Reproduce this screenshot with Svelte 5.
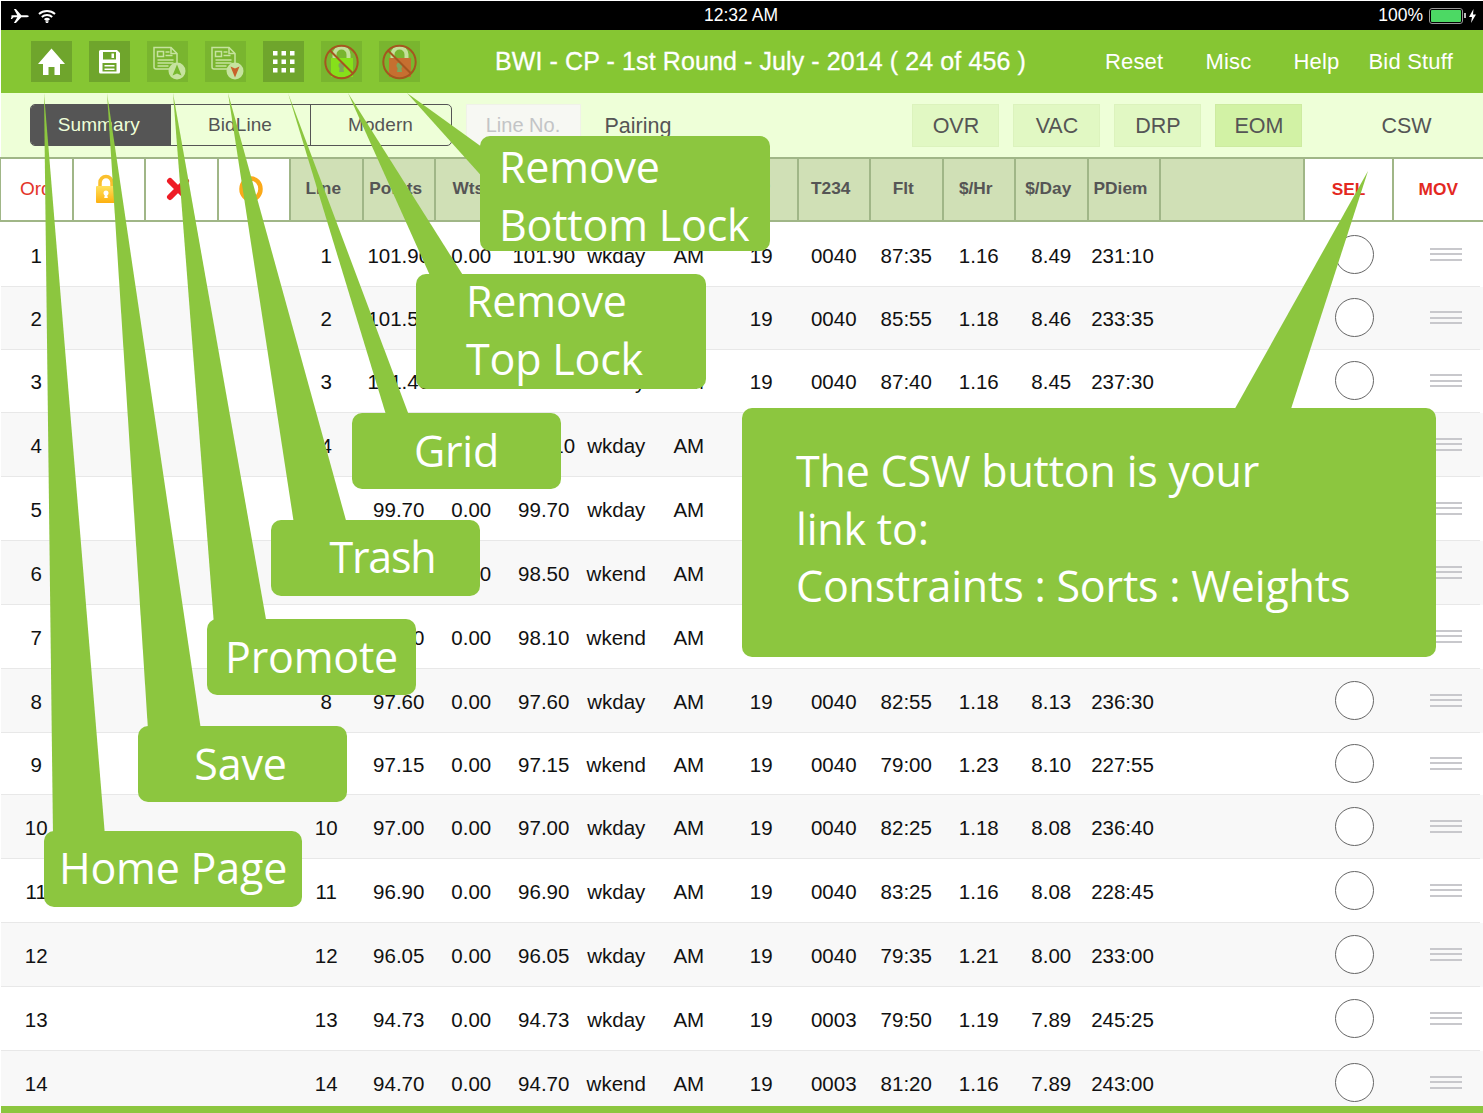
<script>
  const tabs = ['Summary', 'BidLine', 'Modern'];
  const filters = ['OVR', 'VAC', 'DRP', 'EOM'];
  const links = ['Reset', 'Misc', 'Help', 'Bid Stuff'];
  const cols = ['Line', 'Points', 'Wts', 'Tot', 'Day', 'AP', 'DP', 'T234', 'Flt', '$/Hr', '$/Day', 'PDiem'];

  const rows = [
    ['101.90', '0.00', '101.90', 'wkday', 'AM', '19', '0040', '87:35', '1.16', '8.49', '231:10'],
    ['101.50', '0.00', '101.50', 'wkday', 'AM', '19', '0040', '85:55', '1.18', '8.46', '233:35'],
    ['101.40', '0.00', '101.40', 'wkday', 'AM', '19', '0040', '87:40', '1.16', '8.45', '237:30'],
    ['100.10', '0.00', '100.10', 'wkday', 'AM', '19', '0040', '84:10', '1.18', '8.30', '235:00'],
    ['99.70', '0.00', '99.70', 'wkday', 'AM', '19', '0040', '83:50', '1.19', '8.26', '232:40'],
    ['98.50', '0.00', '98.50', 'wkend', 'AM', '19', '0040', '81:05', '1.21', '8.21', '230:15'],
    ['98.10', '0.00', '98.10', 'wkend', 'AM', '19', '0040', '80:30', '1.22', '8.17', '229:50'],
    ['97.60', '0.00', '97.60', 'wkday', 'AM', '19', '0040', '82:55', '1.18', '8.13', '236:30'],
    ['97.15', '0.00', '97.15', 'wkend', 'AM', '19', '0040', '79:00', '1.23', '8.10', '227:55'],
    ['97.00', '0.00', '97.00', 'wkday', 'AM', '19', '0040', '82:25', '1.18', '8.08', '236:40'],
    ['96.90', '0.00', '96.90', 'wkday', 'AM', '19', '0040', '83:25', '1.16', '8.08', '228:45'],
    ['96.05', '0.00', '96.05', 'wkday', 'AM', '19', '0040', '79:35', '1.21', '8.00', '233:00'],
    ['94.73', '0.00', '94.73', 'wkday', 'AM', '19', '0003', '79:50', '1.19', '7.89', '245:25'],
    ['94.70', '0.00', '94.70', 'wkend', 'AM', '19', '0003', '81:20', '1.16', '7.89', '243:00']
  ];

  // callout tails, tip first
  const tails = [
    '44,93 53,836 105,836',
    '107,93 148,730 201,730',
    '173,93 214,625 267,625',
    '228,93 294,524 347,524',
    '288,93 387,418 410,418',
    '348,93 432,280 466,280',
    '407,93 486,150 486,181',
    '1368,171 1233,412 1290,412'
  ];
</script>

<div class="page">
  <div class="status">
    <div class="status-left">
      <svg width="20" height="16" viewBox="0 0 20 16"><path fill="#fff" d="M1 8.200c0-.6 1-1 2-1h4.300L3.900 1h2l5.400 6.200h4.900c1.200 0 2.600.4 2.600 1s-1.400 1-2.600 1h-4.900L5.900 15h-2l3.400-5.800H3.600L2 11H.8l.9-2.800C1.300 8.200 1 8.200 1 8.200z"/></svg>
      <svg width="18" height="14" viewBox="0 0 18 14" fill="none" stroke="#fff" stroke-width="2"><path d="M1 5c4.500-4 11.500-4 16 0"/><path d="M3.800 8c3-2.600 7.400-2.600 10.400 0"/><path d="M6.600 10.800c1.400-1.100 3.400-1.100 4.800 0"/><circle cx="9" cy="12.600" r="0.500" fill="#fff"/></svg>
    </div>
    <div class="time">12:32 AM</div>
    <div class="status-right">
      <span class="pct">100%</span>
      <span class="battery"><span class="charge"></span></span>
      <span class="nub"></span>
      <svg width="7" height="14" viewBox="0 0 7 14"><path fill="#fff" d="M4.500 0 0 8h3L2 14l5-8.500H4z"/></svg>
    </div>
  </div>

  <nav class="nav">
    <div class="tools">
      <div class="tool on">
        <svg viewBox="0 0 41 41"><path fill="#fff" d="M20.500 7.500 7 23h5v11h5.500v-8h6v8H29V23h5z"/></svg>
      </div>
      <div class="tool on">
        <svg viewBox="0 0 41 41">
          <path fill="#fff" d="M11.500 9H28l3 3v19a1.500 1.500 0 0 1-1.500 1.500h-18A1.500 1.500 0 0 1 10 31V10.500A1.500 1.500 0 0 1 11.500 9z"/>
          <path fill="#6fa52c" d="M14 11h13v7.500H14zM13.500 22h14v8.500h-14z"/>
          <path fill="#fff" d="M22.500 12.500h2.500v4.500h-2.500zM15.500 24h10v1.500h-10zM15.500 27.500h10V29h-10z"/>
        </svg>
      </div>
      <div class="tool">
        <svg viewBox="0 0 41 41">
          <g fill="none" stroke="#c6e39f" stroke-width="1.500">
            <path d="M7 6.500h17l6 6v15.500H9a2 2 0 0 1-2-2z"/><path d="M24 6.500v6h6"/>
            <path d="M10.500 10.500h6v5h-6z"/><path d="M18.500 11h4M18.500 14.500h7M10.500 19h16M10.500 22h16M10.500 25h11"/>
          </g>
          <circle cx="30" cy="30" r="8.500" fill="#c6e39f"/>
          <path fill="#77b82e" d="M30 23.500 34.500 34.500 30 32.500 25.500 34.500z"/>
        </svg>
      </div>
      <div class="tool">
        <svg viewBox="0 0 41 41">
          <g fill="none" stroke="#c6e39f" stroke-width="1.500">
            <path d="M7 6.500h17l6 6v15.500H9a2 2 0 0 1-2-2z"/><path d="M24 6.500v6h6"/>
            <path d="M10.500 10.500h6v5h-6z"/><path d="M18.500 11h4M18.500 14.500h7M10.500 19h16M10.500 22h16M10.500 25h11"/>
          </g>
          <circle cx="30" cy="30" r="8.500" fill="#c6e39f"/>
          <path fill="#c8622a" d="M30 36.500 34.500 25.500 30 27.500 25.500 25.500z"/>
        </svg>
      </div>
      <div class="tool on">
        <svg viewBox="0 0 41 41" fill="#fff">
          {#each [10, 18.5, 27] as y}
            {#each [10, 18.5, 27] as x}
              <rect {x} {y} width="4.500" height="4.500" />
            {/each}
          {/each}
        </svg>
      </div>
      {#each ['#86e01a', '#c66f30'] as body}
        <div class="tool">
          <svg viewBox="0 0 41 41">
            <path fill="none" stroke="#c4e09a" stroke-width="4" d="M13.500 17v-3.500a7 7 0 0 1 14 0V17"/>
            <rect x="10" y="17" width="22" height="19" fill={body} />
            <circle cx="20.500" cy="24.500" r="3" fill="#7fa55a"/>
            <path fill="#7fa55a" d="M19 25h3l1 6h-5z"/>
            <circle cx="20.500" cy="21" r="16.200" fill="none" stroke="#a5561f" stroke-width="2"/>
            <path stroke="#a5561f" stroke-width="2" d="M9 9.500 32 32.500"/>
          </svg>
        </div>
      {/each}
    </div>
    <div class="title">BWI - CP - 1st Round - July - 2014 ( 24 of 456 )</div>
    <div class="links">
      {#each links as link}
        <span>{link}</span>
      {/each}
    </div>
  </nav>

  <div class="subbar">
    <div class="tabs">
      {#each tabs as tab, i}
        <div class="tab" class:active={i === 0}>{tab}</div>
      {/each}
    </div>
    <div class="line-input">Line No.</div>
    <div class="pairing">Pairing</div>
    <div class="filters">
      {#each filters as f}
        <div class="filter" class:current={f === 'EOM'}>{f}</div>
      {/each}
    </div>
    <div class="csw">CSW</div>
  </div>

  <div class="head">
    <div class="hcell plain ord">Ord</div>
    <div class="hcell plain">
      <svg class="hicon" width="22" height="30" viewBox="0 0 22 30">
        <defs><linearGradient id="gold" x1="0" y1="0" x2="0" y2="1"><stop offset="0" stop-color="#ffe15a"/><stop offset="1" stop-color="#fdb010"/></linearGradient></defs>
        <path fill="none" stroke="#fbc02d" stroke-width="3.500" d="M5 13V8.500a6 6 0 0 1 12 0V13"/>
        <rect x="1" y="12" width="20" height="17" rx="1" fill="url(#gold)"/>
        <circle cx="11" cy="19" r="2.500" fill="#fff"/><path fill="#fff" d="M10 20h2l.8 4h-3.600z"/>
      </svg>
    </div>
    <div class="hcell plain">
      <svg class="hicon" width="24" height="24" viewBox="0 0 24 24"><path stroke="#ee1c25" stroke-width="6" stroke-linecap="round" d="M4 4 20 20M20 4 4 20"/></svg>
    </div>
    <div class="hcell plain">
      <svg class="hicon" width="24" height="26" viewBox="0 0 24 26"><ellipse cx="12" cy="13" rx="9.500" ry="10.500" fill="none" stroke="#fba919" stroke-width="4.500"/></svg>
    </div>
    {#each cols as c}
      <div class="hcell label">{c}</div>
    {/each}
    <div class="hcell"></div>
    <div class="hcell plain action">SEL</div>
    <div class="hcell plain action">MOV</div>
  </div>

  <div class="list">
    {#each rows as r, i}
      <div class="row">
        <div class="cell">{i + 1}</div>
        <div></div>
        <div class="cell">{i + 1}</div>
        {#each r as v}
          <div class="cell">{v}</div>
        {/each}
        <div class="radio-slot"><span class="radio"></span></div>
        <div class="grip"><i></i><i></i><i></i></div>
      </div>
    {/each}
  </div>

  <div class="foot"></div>

  <svg class="tails" width="1483" height="1113" viewBox="0 0 1483 1113">
    {#each tails as t}
      <polygon points={t} fill="#8cc63f" />
    {/each}
  </svg>

  <div class="callout c-home center">Home Page</div>
  <div class="callout c-save center">Save</div>
  <div class="callout c-promote center">Promote</div>
  <div class="callout c-trash center">Trash</div>
  <div class="callout c-grid center">Grid</div>
  <div class="callout c-top"><div class="lift">Remove<br />Top Lock</div></div>
  <div class="callout c-bottom">Remove<br />Bottom Lock</div>
  <div class="callout c-csw">The CSW button is your<br />link to:<br />Constraints : Sorts : Weights</div>
</div>

<style>
  :global(body) {
    margin: 0;
    background: #fff;
  }
  .page {
    position: relative;
    width: 1483px;
    height: 1113px;
    overflow: hidden;
    padding: 1px 0 0 1px;
    box-sizing: border-box;
    font-family: "Liberation Sans", Arial, sans-serif;
    color: #111;
  }

  .status {
    height: 29px;
    background: #000;
    color: #fff;
    display: grid;
    grid-template-columns: 1fr auto 1fr;
    align-items: center;
    font-size: 17.500px;
  }
  .status-left {
    display: flex;
    align-items: center;
    gap: 8px;
    padding-left: 9px;
  }
  .time {
    margin-right: 2px;
  }
  .status-right {
    display: flex;
    align-items: center;
    justify-content: flex-end;
    padding-right: 7px;
  }
  .pct {
    margin-right: 6px;
  }
  .battery {
    width: 30px;
    height: 12px;
    border: 1px solid #999;
    border-radius: 3px;
    padding: 1px;
    display: block;
  }
  .charge {
    display: block;
    height: 100%;
    background: #4cd964;
    border-radius: 1px;
  }
  .nub {
    width: 2px;
    height: 5px;
    background: #bbb;
    margin: 0 3px 0 1px;
  }

  .nav {
    height: 63px;
    background: #86c633;
    display: flex;
    align-items: center;
    color: #fff;
  }
  .tools {
    display: flex;
    gap: 17px;
    margin-left: 30px;
  }
  .tool {
    width: 41px;
    height: 41px;
    background: #79b52f;
  }
  .tool.on {
    background: #6fa52c;
  }
  .tool svg {
    display: block;
    width: 41px;
    height: 41px;
  }
  .title {
    margin-left: 75px;
    font-size: 25px;
    letter-spacing: 0.100px;
    -webkit-text-stroke: 0.300px #fff;
    white-space: nowrap;
  }
  .links {
    margin-left: auto;
    margin-right: 30px;
    display: flex;
    gap: 42px;
    font-size: 22px;
    letter-spacing: 0.200px;
    white-space: nowrap;
  }
  .links span:last-child {
    margin-left: -13px;
  }

  .subbar {
    height: 64px;
    box-sizing: border-box;
    background: #eeffd8;
    padding-top: 11px;
    display: flex;
    align-items: flex-start;
    color: #555;
  }
  .tabs {
    display: flex;
    margin-left: 29px;
    height: 42px;
    box-sizing: border-box;
    border: 1.500px solid #555;
    border-radius: 5px;
    overflow: hidden;
    font-size: 19px;
    letter-spacing: 0.100px;
  }
  .tab {
    width: 140px;
    display: flex;
    align-items: center;
    justify-content: center;
    border-left: 1.500px solid #555;
    box-sizing: border-box;
  }
  .tab:first-child {
    width: 138.500px;
    padding-right: 3px;
    border-left: 0;
  }
  .tab:last-child {
    width: 141px;
  }
  .tab.active {
    background: #555;
    color: #eeffd8;
  }
  .line-input {
    width: 115px;
    height: 42px;
    margin-left: 14px;
    box-sizing: border-box;
    background: #f7f8f3;
    border: 1px solid #f0f2e8;
    color: #c3c4c6;
    font-size: 20px;
    display: flex;
    align-items: center;
    justify-content: center;
  }
  .pairing {
    margin-left: 24px;
    font-size: 21.500px;
    line-height: 44px;
  }
  .filters {
    display: flex;
    gap: 14px;
    margin-left: 241px;
  }
  .filter {
    width: 87px;
    height: 43px;
    padding-top: 1px;
    box-sizing: border-box;
    background: #e1f8c3;
    border: 1px solid #dcf3bd;
    font-size: 21.500px;
    display: flex;
    align-items: center;
    justify-content: center;
  }
  .filter.current {
    background: #d2f2a5;
    border-color: #cdeba0;
  }
  .csw {
    font-size: 21.500px;
    margin-left: 79px;
    line-height: 45px;
  }

  .head {
    height: 65px;
    box-sizing: border-box;
    margin-left: -1px;
    background: #a0b687;
    padding: 2px 0 2px 1px;
    display: grid;
    grid-template-columns: repeat(15, 70.500px) 70px 142.500px 87px 88.500px;
    column-gap: 2px;
    font-size: 17.300px;
    font-weight: bold;
    color: #555;
  }
  .hcell {
    background: #d0e0b6;
    display: flex;
    align-items: center;
    justify-content: center;
    padding-bottom: 1px;
    box-sizing: border-box;
  }
  .hcell.label {
    padding: 0 6px 3px 0;
  }
  .hcell.plain {
    background: #fff;
  }
  .hicon {
    margin-right: 6px;
  }
  .ord {
    font-weight: normal;
    font-size: 19px;
    color: #e3342a;
    padding-right: 1px;
  }
  .action {
    color: #e3281f;
  }

  .list {
    margin-top: 1px;
  }
  .row {
    height: 64px;
    box-sizing: border-box;
    display: grid;
    grid-template-columns: 72.500px 217.500px repeat(11, 72.500px) 70px 176.500px 39px 56px 32px;
    align-items: center;
    background: linear-gradient(#e8e8e8, #e8e8e8) left bottom / calc(100% - 3px) 1.500px no-repeat;
    font-size: 20.500px;
  }
  .row:nth-child(even) {
    background-color: #f8f8f8;
  }
  .row:nth-child(2),
  .row:nth-child(3) {
    height: 63px;
  }
  .row:nth-child(9) {
    height: 62px;
  }
  .row:last-child {
    background-image: none;
  }
  .cell {
    text-align: center;
    white-space: nowrap;
    padding: 1px 2px 0 0;
  }
  .radio-slot {
    grid-column: 16;
    padding-bottom: 2px;
  }
  .radio {
    display: block;
    width: 39px;
    height: 39px;
    box-sizing: border-box;
    border: 1.500px solid #666;
    border-radius: 50%;
    background: #fff;
  }
  .grip {
    grid-column: 18;
    display: flex;
    flex-direction: column;
    gap: 3.500px;
    padding-bottom: 2px;
  }
  .grip i {
    display: block;
    height: 2px;
    background: #c8c8cc;
  }

  .foot {
    position: absolute;
    left: 1px;
    right: 0;
    bottom: 0;
    height: 7px;
    background: #8cc63f;
  }

  .tails {
    position: absolute;
    left: 0;
    top: 0;
  }
  .callout {
    position: absolute;
    box-sizing: border-box;
    background: #8cc63f;
    border-radius: 10px;
    color: #fff;
    font-family: "Open Sans", "Noto Sans", sans-serif;
    font-size: 43px;
    line-height: 57.500px;
    letter-spacing: -0.200px;
    white-space: nowrap;
  }
  .center {
    display: flex;
    align-items: center;
    justify-content: center;
  }
  .c-home { left: 44px; top: 831px; width: 258px; height: 76px; padding-bottom: 2px; }
  .c-save { left: 138px; top: 726px; width: 209px; height: 76px; padding-right: 4px; }
  .c-promote { left: 207px; top: 619px; width: 209px; height: 76px; padding-bottom: 1px; }
  .c-trash { left: 271px; top: 520px; width: 209px; height: 76px; padding: 0 0 2px 14px; letter-spacing: -1.200px; }
  .c-grid { left: 352px; top: 413px; width: 209px; height: 76px; }
  .c-top { left: 416px; top: 274px; width: 290px; height: 115px; padding-left: 50px; }
  .lift { margin-top: -2px; }
  .c-bottom { left: 480px; top: 136px; width: 290px; height: 115px; padding: 2px 0 0 19px; }
  .c-csw { left: 742px; top: 408px; width: 694px; height: 249px; padding: 34px 0 0 54px; }
</style>
